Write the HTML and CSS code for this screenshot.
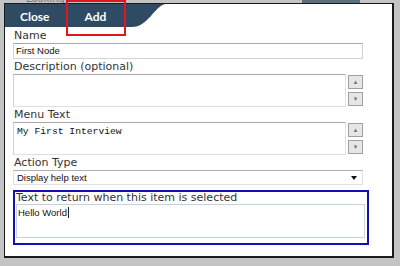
FILE: index.html
```html
<!DOCTYPE html>
<html>
	<head>
		<meta charset="UTF-8">
		<title>Edit Node</title>
		<link rel="stylesheet" href="styles.css">
	</head>
	<body>
		<div class="behind">
			<span class="behind-title">Looking Gl</span>
			<span class="behind-btn"></span>
		</div>
		<div class="dialog">
			<div class="tabs">
				<a href="#" class="tab">Close</a>
				<a href="#" class="tab">Add</a>
			</div>
			<div class="form">
				<label class="lbl">Name</label>
				<div class="field">First Node</div>

				<label class="lbl">Description (optional)</label>
				<div class="area-row">
					<div class="area"></div>
					<div class="spin">
						<span class="spin-btn">&#9652;</span>
						<span class="spin-btn">&#9662;</span>
					</div>
				</div>

				<label class="lbl">Menu Text</label>
				<div class="area-row">
					<div class="area mono">My First Interview</div>
					<div class="spin">
						<span class="spin-btn">&#9652;</span>
						<span class="spin-btn">&#9662;</span>
					</div>
				</div>

				<label class="lbl">Action Type</label>
				<div class="select">
					<span>Display help text</span>
					<span class="caret"></span>
				</div>

				<div class="focus-box">
					<label class="lbl">Text to return when this item is selected</label>
					<div class="area answer">Hello World<span class="cursor"></span></div>
				</div>
			</div>
		</div>
		<div class="mark"></div>
	</body>
</html>
```

FILE: styles.css
```css
* {
	margin: 0;
	padding: 0;
	box-sizing: border-box;
}

body {
	width: 400px;
	height: 266px;
	overflow: hidden;
	background: #c4c4c4;
	font-family: "DejaVu Sans", Verdana, sans-serif;
	position: relative;
}

.behind {
	height: 3px;
	overflow: hidden;
	display: flex;
	align-items: flex-end;
	padding-left: 26px;
}

.behind-title {
	font-size: 10px;
	line-height: 10px;
	color: #777;
	margin-bottom: -1px;
}

.behind-btn {
	width: 58px;
	height: 3px;
	background: #5d7079;
	margin-left: auto;
	margin-right: 40px;
}

.dialog {
	margin-left: 4px;
	width: 390px;
	height: 255px;
	background: #fff;
	border: 1px solid #1a1a1a;
	border-right-width: 2px;
	border-bottom-width: 2px;
}

.tabs {
	width: 160px;
	height: 23px;
	background: #2e4b63;
	display: flex;
	align-items: center;
	clip-path: path('M0 0 H160 C149 3 143 23 127 23 H0 Z');
}

.tab {
	color: #fff;
	text-decoration: none;
	font-family: Lato, "Open Sans", sans-serif;
	font-weight: bold;
	font-size: 12px;
	padding-top: 1px;
}

.tab:first-child {
	margin-left: 15px;
}

.tab + .tab {
	margin-left: 35px;
}

.form {
	padding: 2px 0 0 8px;
	display: flex;
	flex-direction: column;
}

.lbl {
	display: block;
	font-size: 11px;
	line-height: 14px;
	color: #333;
	padding-left: 1px;
}

.field {
	width: 350px;
	height: 16px;
	border: 1px solid #d4d4d4;
	border-top-color: #a8a8a8;
	font-family: "Liberation Sans", Arial, sans-serif;
	font-size: 9.5px;
	line-height: 14px;
	padding-left: 2px;
	color: #111;
	margin-bottom: 1px;
}

.area-row {
	display: flex;
	gap: 2px;
	height: 33px;
	margin-bottom: 1px;
}

.area {
	width: 333px;
	height: 33px;
	border: 1px solid #e0e0e0;
	border-top-color: #a8a8a8;
	border-left-color: #d0d0d0;
}

.mono {
	font-family: "Liberation Mono", "Courier New", monospace;
	font-size: 9.7px;
	line-height: 12px;
	padding: 3px 0 0 3px;
	color: #111;
}

.spin {
	display: flex;
	flex-direction: column;
	justify-content: space-between;
	padding: 1px 0 1px;
}

.spin-btn {
	width: 15px;
	height: 14px;
	background: #e6e6e6;
	border: 1px solid #a0a0a0;
	font-size: 7px;
	line-height: 12px;
	text-align: center;
	color: #777;
}

.select {
	width: 350px;
	height: 15px;
	border: 1px solid #e2e2e2;
	border-top-color: #b0b0b0;
	display: flex;
	align-items: center;
	justify-content: space-between;
	font-family: "Liberation Sans", Arial, sans-serif;
	font-size: 9.5px;
	color: #111;
	padding: 0 5px 0 3px;
}

.caret {
	width: 0;
	height: 0;
	border-left: 3px solid transparent;
	border-right: 3px solid transparent;
	border-top: 4px solid #111;
}

.focus-box {
	width: 356px;
	height: 55px;
	margin-top: 5px;
	border: 2px solid #1010b4;
	padding: 0 0 0 1px;
}

.focus-box .lbl {
	padding-left: 0;
	line-height: 12px;
}

.answer {
	width: 349px;
	height: 34px;
	border: 1px solid #c4d2da;
	font-family: "Liberation Sans", Arial, sans-serif;
	font-size: 9.5px;
	line-height: 12px;
	padding: 2px 0 0 1px;
	color: #111;
}

.cursor {
	display: inline-block;
	width: 1px;
	height: 11px;
	background: #222;
	vertical-align: -2px;
	margin-left: 1px;
}

.mark {
	position: absolute;
	left: 66px;
	top: 0;
	width: 60px;
	height: 36px;
	border: 2px solid #e0161c;
}
```
